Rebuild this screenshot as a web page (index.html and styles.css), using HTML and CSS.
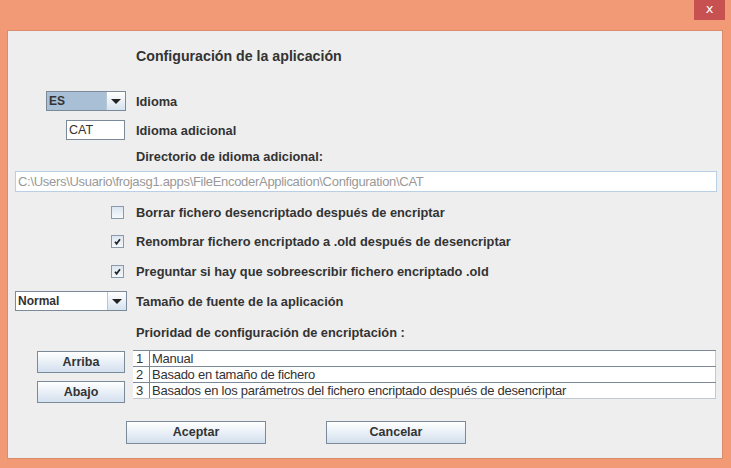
FILE: index.html
```html
<!DOCTYPE html>
<html lang="es">
<head>
<meta charset="utf-8">
<title>Configuración de la aplicación</title>
<link rel="stylesheet" href="styles.css">
</head>
<body>
<div class="window">
  <div class="titlebar">
    <div class="close">x</div>
  </div>
  <div class="panel">
    <div class="row title-row">
      <div class="lead"></div>
      <div class="label title">Configuración de la aplicación</div>
    </div>
    <div class="row r-idioma">
      <div class="lead">
        <div class="combo combo-es">
          <div class="combo-value sel">ES</div>
          <div class="combo-arrow"><span class="tri"></span></div>
        </div>
      </div>
      <div class="label">Idioma</div>
    </div>
    <div class="row r-cat">
      <div class="lead">
        <div class="field field-cat">CAT</div>
      </div>
      <div class="label">Idioma adicional</div>
    </div>
    <div class="row r-dir">
      <div class="lead"></div>
      <div class="label">Directorio de idioma adicional:</div>
    </div>
    <div class="path">C:\Users\Usuario\frojasg1.apps\FileEncoderApplication\Configuration\CAT</div>
    <div class="row r-chk1">
      <div class="lead"><div class="check"></div></div>
      <div class="label">Borrar fichero desencriptado después de encriptar</div>
    </div>
    <div class="row r-chk2">
      <div class="lead"><div class="check on"><svg viewBox="0 0 13 13" width="13" height="13"><path d="M4 6.8 L5.6 8.8 L9 4.2" fill="none" stroke="#222" stroke-width="1.7"/></svg></div></div>
      <div class="label">Renombrar fichero encriptado a .old después de desencriptar</div>
    </div>
    <div class="row r-chk3">
      <div class="lead"><div class="check on"><svg viewBox="0 0 13 13" width="13" height="13"><path d="M4 6.8 L5.6 8.8 L9 4.2" fill="none" stroke="#222" stroke-width="1.7"/></svg></div></div>
      <div class="label">Preguntar si hay que sobreescribir fichero encriptado .old</div>
    </div>
    <div class="row r-font">
      <div class="lead">
        <div class="combo combo-font">
          <div class="combo-value">Normal</div>
          <div class="combo-arrow"><span class="tri"></span></div>
        </div>
      </div>
      <div class="label">Tamaño de fuente de la aplicación</div>
    </div>
    <div class="row r-prio">
      <div class="lead"></div>
      <div class="label">Prioridad de configuración de encriptación :</div>
    </div>
    <div class="row r-table">
      <div class="lead lead-buttons">
        <div class="btn btn-small">Arriba</div>
        <div class="btn btn-small">Abajo</div>
      </div>
      <div class="table">
        <div class="trow"><div class="c1">1</div><div class="c2">Manual</div></div>
        <div class="trow"><div class="c1">2</div><div class="c2">Basado en tamaño de fichero</div></div>
        <div class="trow"><div class="c1">3</div><div class="c2">Basados en los parámetros del fichero encriptado después de desencriptar</div></div>
      </div>
    </div>
    <div class="actions">
      <div class="btn btn-big">Aceptar</div>
      <div class="btn btn-big">Cancelar</div>
    </div>
  </div>
</div>
</body>
</html>
```

FILE: styles.css
```css
html, body {
  margin: 0;
  padding: 0;
}
body {
  width: 731px;
  height: 468px;
  overflow: hidden;
  background: #f29a76;
  font-family: "Liberation Sans", sans-serif;
}
.window {
  width: 731px;
  height: 468px;
  display: flex;
  flex-direction: column;
}
.titlebar {
  height: 30px;
  display: flex;
  justify-content: flex-end;
  align-items: flex-start;
  padding-right: 6px;
}
.close {
  width: 31px;
  height: 20px;
  background: #c75050;
  color: #fff;
  font-family: "DejaVu Sans", sans-serif;
  font-size: 13px;
  line-height: 18px;
  text-align: center;
}
.panel {
  margin-left: 7px;
  width: 716px;
  height: 429px;
  border: 1px solid #d98b6b;
  background: #eeeeee;
  box-sizing: border-box;
  display: flex;
  flex-direction: column;
}
.row {
  display: flex;
  align-items: center;
  gap: 9px;
}
.lead {
  width: 119px;
  flex: none;
  display: flex;
  justify-content: flex-end;
}
.label {
  font-family: "Liberation Sans", sans-serif;
  font-weight: bold;
  font-size: 12.8px;
  color: #333333;
  white-space: nowrap;
}
.label.title {
  font-size: 14.2px;
}
.title-row { height: 20px; margin-top: 15px; }
.r-idioma { height: 20px; margin-top: 25px; }
.r-cat { height: 20px; margin-top: 9px; }
.r-dir { height: 18px; margin-top: 7px; }
.r-chk1 { height: 20px; margin-top: 10px; }
.r-chk2 { height: 20px; margin-top: 9px; }
.r-chk3 { height: 20px; margin-top: 10px; }
.r-font { height: 20px; margin-top: 10px; }
.r-prio { height: 18px; margin-top: 12px; }
.r-table { margin-top: 9px; align-items: flex-start; gap: 6px; }

.combo {
  height: 20px;
  box-sizing: border-box;
  border: 1px solid #7a8a99;
  display: flex;
  background: #fff;
}
.combo-es { width: 80px; margin-right: 1px; }
.combo-font { width: 112px; }
.combo-value {
  flex: 1;
  font-family: "Liberation Sans", sans-serif;
  font-weight: bold;
  font-size: 12px;
  color: #333;
  line-height: 18px;
  padding-left: 2px;
}
.combo-value.sel { background: #a9bfd6; }
.combo-arrow {
  width: 18px;
  border-left: 1px solid #b8c7d6;
  background: linear-gradient(#ffffff, #d6e2ee);
  display: flex;
  align-items: center;
  justify-content: center;
}
.tri {
  width: 0;
  height: 0;
  border-left: 5px solid transparent;
  border-right: 5px solid transparent;
  border-top: 5px solid #222;
}
.field {
  height: 20px;
  box-sizing: border-box;
  border: 1px solid #7a8a99;
  background: #fff;
  font-family: "Liberation Sans", sans-serif;
  font-size: 12.5px;
  line-height: 18px;
  color: #333;
  padding-left: 2px;
}
.field-cat { width: 59px; margin-right: 2px; }
.path {
  margin: 6px 0 0 7px;
  width: 702px;
  height: 21px;
  box-sizing: border-box;
  border: 1px solid #b8cfe5;
  background: #fff;
  font-family: "Liberation Sans", sans-serif;
  font-size: 13px;
  line-height: 19px;
  color: #999;
  padding-left: 2px;
  letter-spacing: -0.3px;
}
.check {
  width: 13px;
  height: 13px;
  box-sizing: border-box;
  border: 1px solid #8a9aab;
  background: linear-gradient(#dbe5ef, #f6f9fc);
  margin-right: 3px;
  position: relative;
}
.check svg {
  position: absolute;
  left: -1px;
  top: -1px;
}
.lead-buttons {
  flex-direction: column;
  align-items: flex-end;
  gap: 8px;
  padding-top: 1px;
}
.btn {
  box-sizing: border-box;
  border: 1px solid #7a8a99;
  background: linear-gradient(#ffffff, #d3e0ee);
  font-family: "Liberation Sans", sans-serif;
  font-weight: bold;
  font-size: 12.5px;
  color: #333;
  text-align: center;
}
.btn-small {
  width: 88px;
  height: 22px;
  line-height: 20px;
  margin-right: 2px;
}
.table {
  width: 583px;
  border-top: 1px solid #7a8a99;
  background: #fff;
  font-family: "Liberation Sans", sans-serif;
  font-size: 13px;
  color: #333;
}
.trow {
  display: flex;
  height: 16px;
  border-bottom: 1px solid #7a8a99;
  box-sizing: border-box;
  line-height: 15px;
}
.trow:last-child { border-bottom-color: #c0c8d0; }
.c1 {
  width: 17px;
  border-right: 1px solid #7a8a99;
  box-sizing: border-box;
  padding-left: 3px;
}
.c2 {
  flex: 1;
  padding-left: 2px;
  letter-spacing: -0.25px;
  border-right: 1px solid #c0c8d0;
}
.actions {
  display: flex;
  gap: 60px;
  margin-top: 18px;
  padding-left: 118px;
}
.btn-big {
  width: 140px;
  height: 23px;
  line-height: 21px;
}
```
